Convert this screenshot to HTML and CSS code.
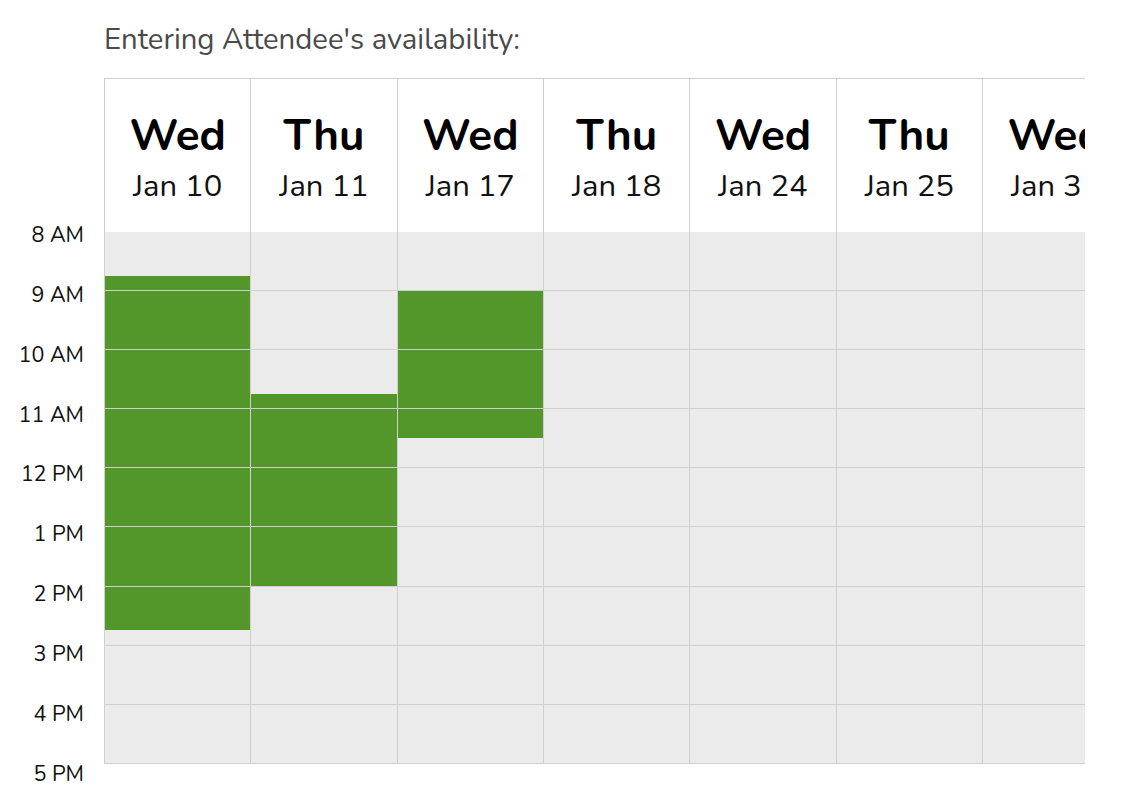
FILE: index.html
```html
<!DOCTYPE html>
<html>
<head>
<meta charset="utf-8">
<link rel="stylesheet" href="styles.css">
</head>
<body>
<div class="page">
  <h1 class="title">Entering Attendee's availability:</h1>
  <div class="sheet">
    <div class="labels">
      <div class="label">8 AM</div>
      <div class="label">9 AM</div>
      <div class="label">10 AM</div>
      <div class="label">11 AM</div>
      <div class="label">12 PM</div>
      <div class="label">1 PM</div>
      <div class="label">2 PM</div>
      <div class="label">3 PM</div>
      <div class="label">4 PM</div>
      <div class="label last">5 PM</div>
    </div>
    <div class="grid">
      <div class="day">
        <div class="head"><div class="dname">Wed</div><div class="ddate">Jan 10</div></div>
        <div class="hour split"><div class="q"></div><div class="q"></div><div class="q"></div><div class="q on"></div></div>
        <div class="hour on"></div>
        <div class="hour on"></div>
        <div class="hour on"></div>
        <div class="hour on"></div>
        <div class="hour on"></div>
        <div class="hour split"><div class="q on"></div><div class="q on"></div><div class="q on"></div><div class="q"></div></div>
        <div class="hour"></div>
        <div class="hour"></div>
      </div>
      <div class="day">
        <div class="head"><div class="dname">Thu</div><div class="ddate">Jan 11</div></div>
        <div class="hour"></div>
        <div class="hour"></div>
        <div class="hour split"><div class="q"></div><div class="q"></div><div class="q"></div><div class="q on"></div></div>
        <div class="hour on"></div>
        <div class="hour on"></div>
        <div class="hour on"></div>
        <div class="hour"></div>
        <div class="hour"></div>
        <div class="hour"></div>
      </div>
      <div class="day">
        <div class="head"><div class="dname">Wed</div><div class="ddate">Jan 17</div></div>
        <div class="hour"></div>
        <div class="hour on"></div>
        <div class="hour on"></div>
        <div class="hour split"><div class="q on"></div><div class="q on"></div><div class="q"></div><div class="q"></div></div>
        <div class="hour"></div>
        <div class="hour"></div>
        <div class="hour"></div>
        <div class="hour"></div>
        <div class="hour"></div>
      </div>
      <div class="day">
        <div class="head"><div class="dname">Thu</div><div class="ddate">Jan 18</div></div>
        <div class="hour"></div><div class="hour"></div><div class="hour"></div>
        <div class="hour"></div><div class="hour"></div><div class="hour"></div>
        <div class="hour"></div><div class="hour"></div><div class="hour"></div>
      </div>
      <div class="day">
        <div class="head"><div class="dname">Wed</div><div class="ddate">Jan 24</div></div>
        <div class="hour"></div><div class="hour"></div><div class="hour"></div>
        <div class="hour"></div><div class="hour"></div><div class="hour"></div>
        <div class="hour"></div><div class="hour"></div><div class="hour"></div>
      </div>
      <div class="day">
        <div class="head"><div class="dname">Thu</div><div class="ddate">Jan 25</div></div>
        <div class="hour"></div><div class="hour"></div><div class="hour"></div>
        <div class="hour"></div><div class="hour"></div><div class="hour"></div>
        <div class="hour"></div><div class="hour"></div><div class="hour"></div>
      </div>
      <div class="day">
        <div class="head"><div class="dname">Wed</div><div class="ddate">Jan 31</div></div>
        <div class="hour"></div><div class="hour"></div><div class="hour"></div>
        <div class="hour"></div><div class="hour"></div><div class="hour"></div>
        <div class="hour"></div><div class="hour"></div><div class="hour"></div>
      </div>
      <div class="day">
        <div class="head"><div class="dname">Thu</div><div class="ddate">Feb 1</div></div>
        <div class="hour"></div><div class="hour"></div><div class="hour"></div>
        <div class="hour"></div><div class="hour"></div><div class="hour"></div>
        <div class="hour"></div><div class="hour"></div><div class="hour"></div>
      </div>
    </div>
  </div>
</div>
</body>
</html>
```

FILE: styles.css
```css
html, body {
  margin: 0;
  padding: 0;
  background: #ffffff;
  overflow: hidden;
}

.page {
  font-family: "Nunito", Lato, "Open Sans", sans-serif;
  color: #111111;
  padding-top: 22.5px;
}

.title {
  margin: 0 0 23.5px 104px;
  font-size: 29.3px;
  line-height: 32px;
  font-weight: 400;
  color: #4a4a4a;
}

.sheet {
  display: flex;
  align-items: flex-start;
}

.labels {
  width: 84px;
  margin-right: 20px;
  padding-top: 145.1px;
  display: flex;
  flex-direction: column;
  align-items: flex-end;
}

.label {
  height: 59.83px;
  line-height: 24px;
  font-size: 21.5px;
  color: #111111;
  white-space: nowrap;
}

.label.last {
  height: 24px;
}

.grid {
  width: 981px;
  overflow: hidden;
  display: flex;
  border-top: 1px solid #cfcfcf;
}

.day {
  flex: 0 0 146.33px;
  box-sizing: border-box;
  border-left: 1px solid #cfcfcf;
  display: flex;
  flex-direction: column;
}

.head {
  height: 153px;
  box-sizing: border-box;
  padding-top: 30.5px;
  background: #ffffff;
  text-align: center;
  white-space: nowrap;
}

.dname {
  font-size: 44px;
  line-height: 52px;
  font-weight: 700;
  color: #000000;
}

.ddate {
  margin-top: 6.3px;
  font-size: 31px;
  line-height: 36px;
  color: #111111;
}

.hour {
  height: 59.1px;
  box-sizing: border-box;
  border-bottom: 1px solid #cfcfcf;
  background: #ebebeb;
}

.hour.on {
  background: #53972b;
}

.hour.split {
  display: flex;
  flex-direction: column;
}

.q {
  flex: 1 1 0;
}

.q.on {
  background: #53972b;
}
```
